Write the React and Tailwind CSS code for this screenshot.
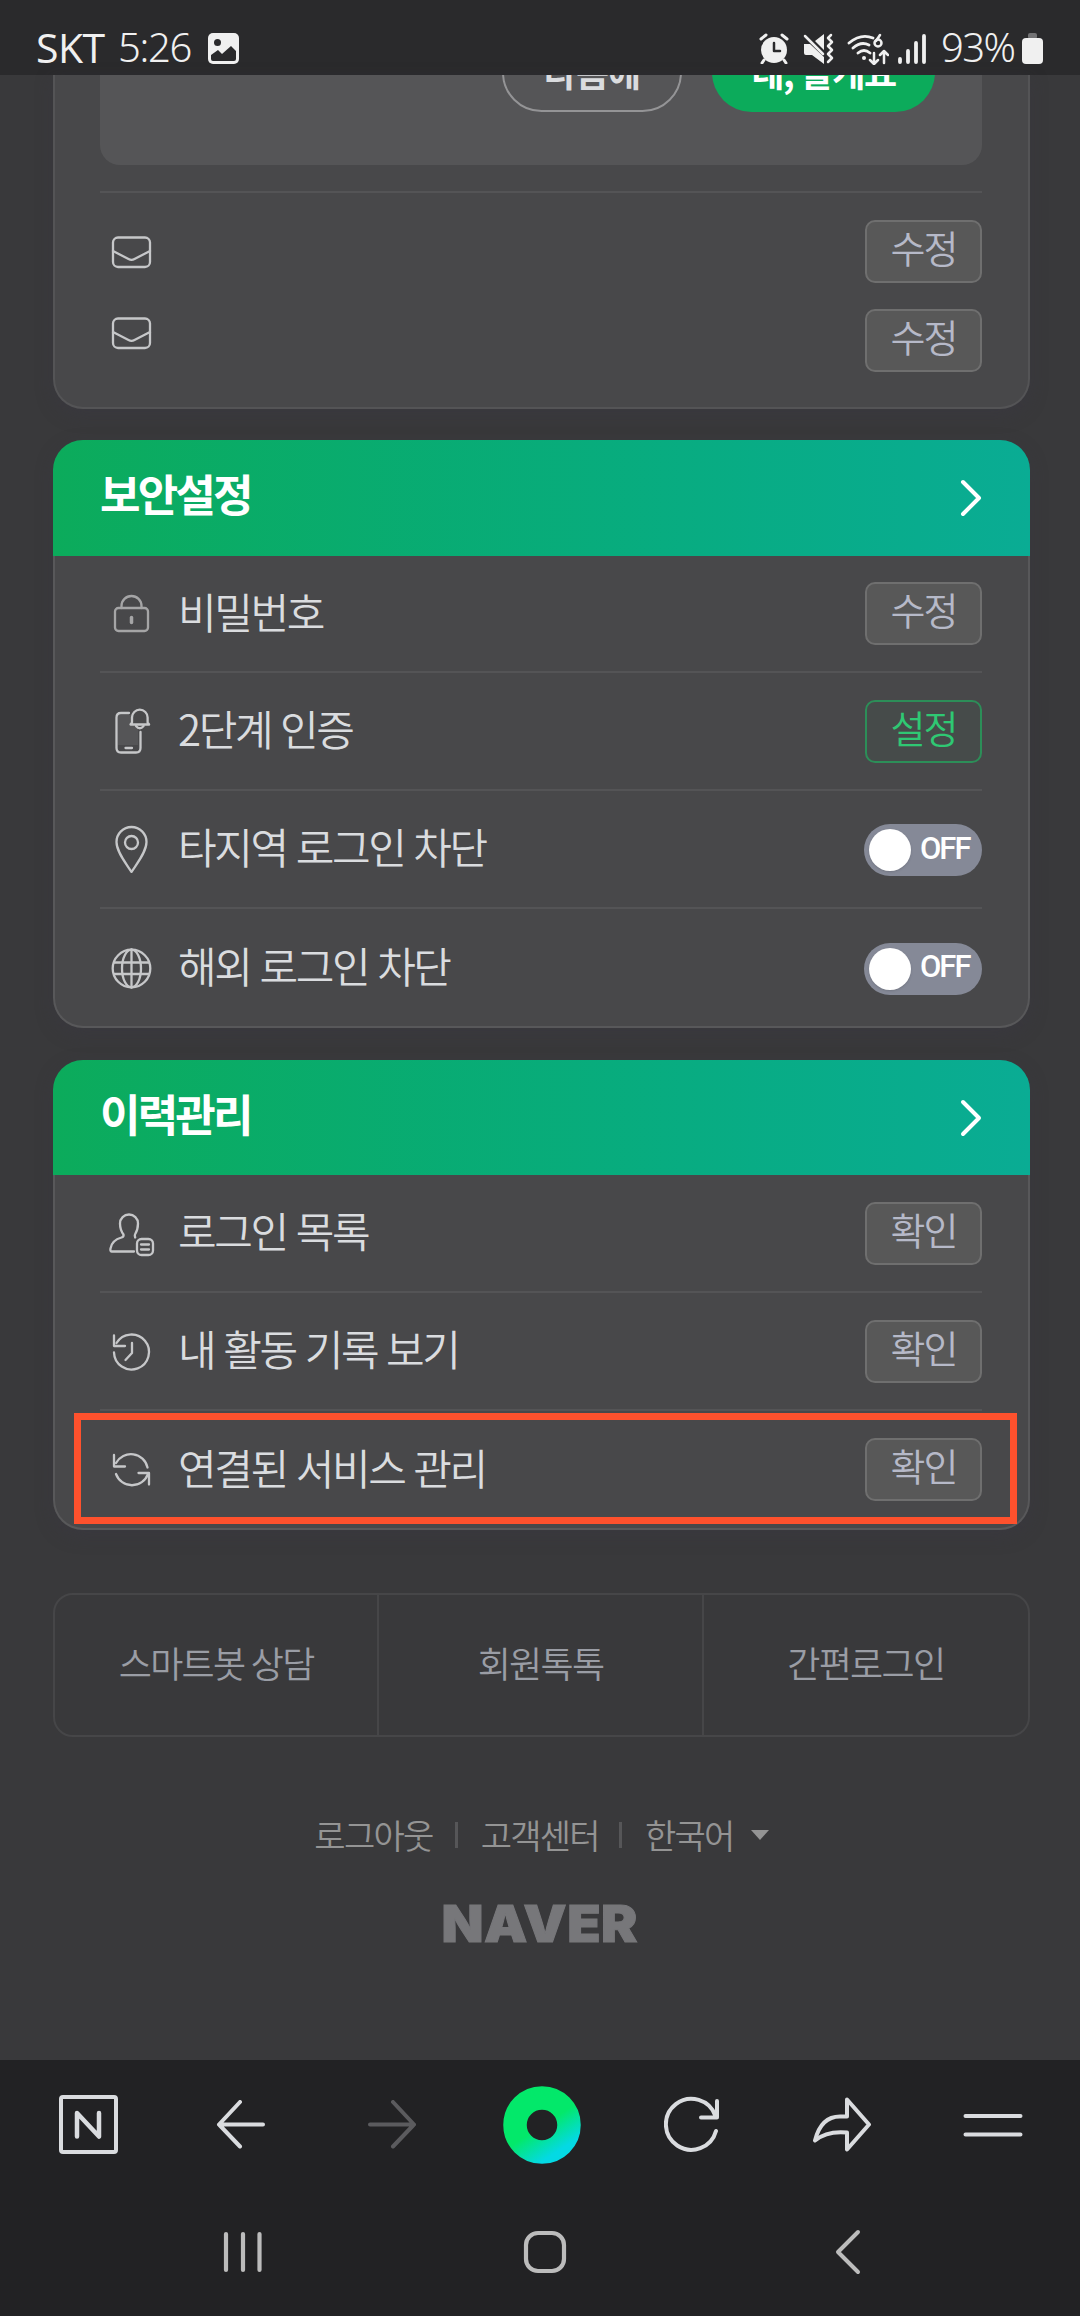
const KR = 'font-["Noto_Sans_CJK_KR",sans-serif]';

function Svg({ w, h, className = "", children }) {
    return (
        <svg width={w} height={h} viewBox={`0 0 ${w} ${h}`} fill="none" stroke="currentColor" strokeLinecap="round" strokeLinejoin="round" strokeWidth="2.300" className={`block shrink-0 ${className}`}>
            {children}
        </svg>
    );
}

/* 48x48 row icons */
const icons = {
    mail: (
        <>
            <rect x="5" y="9.500" width="37" height="29.500" rx="5" />
            <path d="M5 23l15.500 8q3 1.600 6 0L42 23" />
        </>
    ),
    lock: (
        <g className="text-[#a5a5a6]" stroke="currentColor">
            <rect x="7" y="18" width="33" height="23" rx="3.500" />
            <path d="M13.500 18v-2a10 10 0 0 1 20 0v2" />
            <path d="M23.500 27.500v5" strokeWidth="3.500" />
        </g>
    ),
    phone: (
        <>
            <rect x="10" y="8" width="20" height="30" fill="#555557" stroke="none" />
            <path d="M21 6h-8q-4.500 0-4.500 4.500V41q0 4.500 4.500 4.500h15q4.500 0 4.500-4.500V25M17.500 41h6.500" />
            <path d="M22.500 17.500l1.500-2v-5a7.800 7.800 0 0 1 15.600 0v5l1.500 2z" fill="#48484a" />
            <path d="M28 19q3.800 4.500 7.600 0" />
        </>
    ),
    pin: (
        <>
            <path d="M23.500 47C18.500 39 8.500 27 8.500 17a15 15 0 0 1 30 0c0 10-10 22-15 30z" />
            <circle cx="23.500" cy="17.500" r="6.500" />
        </>
    ),
    globe: (
        <>
            <circle cx="23.500" cy="24.500" r="18.800" />
            <ellipse cx="23.500" cy="24.500" rx="9.500" ry="18.800" />
            <path d="M23.500 5.500v38M6 18.500h35M6 30h35" />
        </>
    ),
    user: (
        <g transform="translate(0 2)">
            <path d="M26 40.500H3.500q-1.500 0-1-3c1-6 5.500-9.500 11-11q2.500-.8 2-3c-3-4-3.500-8-3.500-11a9 9 0 0 1 18 0c0 3-.5 7-3 11q-.5 1 .2 3" />
            <rect x="29" y="28" width="16" height="16" rx="4.500" />
            <path d="M33 33.500h8M33 38.500h8" />
        </g>
    ),
    history: (
        <g transform="translate(0 1)">
            <path d="M6 24.500a17.500 17.500 0 1 0 2.500-9.500" />
            <path d="M6 7.500v10.500h11" />
            <path d="M24 15v10l-6.500 7" />
        </g>
    ),
    sync: (
        <>
            <path d="M39.500 21.500A17 17 0 0 0 8 17M8 28a17 17 0 0 0 32 0" />
            <path d="M6 9v11.500h11M30.500 27h10.500v11.500" />
        </>
    ),
};

function RowIcon({ name }) {
    return <Svg w={48} h={48} className="text-[#c6c7c9]">{icons[name]}</Svg>;
}

function Button({ children, green }) {
    return (
        <button
            className={`flex h-[63px] w-[117px] justify-center rounded-[10px] border-2 text-[38px] leading-[49px] font-[350] tracking-[-2px] ${
                green ? "border-[#2c8e58] bg-[#464b4a] text-[#2fc873]" : "border-[#6f6f6f] bg-[#585858] text-[#b6b9c8]"
            }`}
        >
            {children}
        </button>
    );
}

function Toggle() {
    return (
        <div className="mt-[2px] flex h-[52px] w-[118px] items-center rounded-full bg-[#858997] pl-[5px]">
            <div className="size-[42px] rounded-full bg-white shadow-sm" />
            <span className='ml-[9px] -mt-[3px] font-["Roboto"] text-[31px] leading-[40px] font-medium tracking-[-2px] text-white'>OFF</span>
        </div>
    );
}

function Row({ icon, label, children, className = "h-[118px] border-b-2" }) {
    return (
        <div className={`flex items-center border-[#545456] ${className}`}>
            <div className="ml-[8px]"><RowIcon name={icon} /></div>
            <span className="ml-[22px] flex-1 whitespace-pre pb-[6px] text-[42px] leading-[60px] font-[350] tracking-[-2.400px] text-[#dadcdf] [word-spacing:2px]">{label}</span>
            {children}
        </div>
    );
}

function Section({ title, className, headClass, children }) {
    return (
        <section className={`rounded-[30px] shadow-[0_6px_16px_rgba(58,56,66,0.5)] ${className}`}>
            <header className={`flex items-center justify-between rounded-t-[30px] bg-linear-to-r from-[#0cab5b] to-[#0aac94] pr-[48px] pl-[47px] ${headClass}`}>
                <h2 className="pb-[10px] text-[44px] leading-[60px] font-bold tracking-[-2.800px] text-white">{title}</h2>
                <Svg w={22} h={38} className="text-white">
                    <path d="M3 3l16 16L3 35" strokeWidth="4" />
                </Svg>
            </header>
            <div className="rounded-b-[30px] border-2 border-t-0 border-[#58585a] bg-[#48484a] pr-[46px] pl-[45px]">{children}</div>
        </section>
    );
}

function StatusBar() {
    return (
        <div className='flex h-[75px] shrink-0 items-start bg-[#2a2a2c] pt-[33px] pl-[36px] font-["Noto_Sans"] text-[40px] leading-[31px] text-[#f0f0f0]'>
            <span className='-mt-[1px] w-[82px] font-["Open_Sans"] text-[41px] tracking-[-0.5px]'>SKT</span>
            <span className="-mt-[2px] w-[90px] font-[350] tracking-[-1.300px]">5:26</span>
            <Svg w={31} h={31}>
                <rect width="31" height="31" rx="5" fill="currentColor" stroke="none" />
                <circle cx="9.500" cy="9.500" r="3.500" fill="#2a2a2c" stroke="none" />
                <path d="M3 22l7-5 4 4 9-8 5 5v8q0 2-2 2H5q-2 0-2-2z" fill="#2a2a2c" stroke="none" />
            </Svg>
            <div className="flex-1" />
            <Svg w={30} h={31}>
                <circle cx="15" cy="17" r="13" fill="currentColor" stroke="none" />
                <path d="M2 6l5-4M28 6l-5-4M5 27l-2 3M25 27l2 3" strokeWidth="3" />
                <path d="M15 10v8h6" stroke="#2a2a2c" strokeWidth="2.500" />
            </Svg>
            <Svg w={31} h={31} className="ml-[14px]">
                <path d="M1 11h6l14 13v7L9 22H3q-2 0-2-2zM12 8l9-7v16z" fill="currentColor" stroke="none" />
                <path d="M2 3l18 18" strokeWidth="2.500" />
                <path d="M28 2l-3 3 4 4-4 4 4 4-4 4 4 4-4 4" strokeWidth="2.500" />
            </Svg>
            <Svg w={42} h={32} className="ml-[13px]">
                <path d="M2 10q12-10 24-5M6 15q8-7 16-3M11 20q6-5 12 0" strokeWidth="2.800" />
                <circle cx="17" cy="25" r="2" fill="currentColor" stroke="none" />
                <path d="M33 2l-4 6" strokeWidth="2.500" />
                <circle cx="31" cy="10" r="3.500" strokeWidth="2.500" />
                <path d="M27 20v10M23 27l4 4 4-4M37 30V19M33 22l4-4 4 4" strokeWidth="2.500" />
            </Svg>
            <Svg w={30} h={31} className="ml-[9px]">
                <path d="M2 26v3M10 18v11M18 10v19M26 3v26" strokeWidth="3.800" />
            </Svg>
            <span className="-mt-[2px] ml-[13px] w-[81px] font-[350] tracking-[-1.600px]">93%</span>
            <Svg w={22} h={31} className="mr-[36px]">
                <rect x="6" y="0" width="9" height="6" rx="2" fill="#727274" stroke="none" />
                <rect y="5" width="21" height="26" rx="4" fill="currentColor" stroke="none" />
            </Svg>
        </div>
    );
}

function ProfileCard() {
    return (
        <section className="mx-[53px] h-[334px] w-[977px] shrink-0 overflow-hidden rounded-b-[30px] border-2 border-t-0 border-[#545456] bg-[#48484a] pr-[46px] pl-[45px] shadow-[0_6px_16px_rgba(58,56,66,0.5)]">
            <div className="flex h-[90px] items-start justify-end gap-[30px] overflow-hidden rounded-b-[20px] bg-[#555557] pr-[47px]">
                <div className="-mt-[42px] flex h-[79px] w-[180px] shrink-0 items-center justify-center rounded-full border-2 border-[#949496] pb-[4px] text-[36px] leading-[40px] font-bold tracking-[-1px] text-[#dadcdf]">다음에</div>
                <div className="-mt-[42px] flex h-[79px] w-[223px] shrink-0 items-center justify-center rounded-full bg-[#0cab5b] pb-[4px] text-[36px] leading-[40px] font-bold tracking-[-1.300px] text-white">네, 할게요</div>
            </div>
            <div className="mt-[26px] h-[2px] bg-[#545456]" />
            <div className="mt-[27px] flex justify-between pl-[8px]">
                <div className="pt-[8px]"><RowIcon name="mail" /></div>
                <Button>수정</Button>
            </div>
            <div className="mt-[26px] flex justify-between pl-[8px]">
                <RowIcon name="mail" />
                <Button>수정</Button>
            </div>
        </section>
    );
}

function Footer() {
    return (
        <footer className="flex w-[977px] flex-col items-center font-[350]">
            <div className="grid h-[144px] w-full grid-cols-3 divide-x-2 divide-[#464648] rounded-[20px] border-2 border-[#464648] text-center text-[36px] leading-[135px] tracking-[-1.700px] text-[#9a9da5]">
                <span>스마트봇 상담</span>
                <span>회원톡톡</span>
                <span>간편로그인</span>
            </div>
            <div className="mt-[74px] flex h-[48px] items-center text-[34px] leading-[48px] tracking-[-1.700px] text-[#949494]">
                <span>로그아웃</span>
                <i className="mr-[23px] ml-[22px] h-[26px] w-[3px] bg-[#565658]" />
                <span>고객센터</span>
                <i className="mr-[23px] ml-[20px] h-[26px] w-[3px] bg-[#565658]" />
                <span>한국어</span>
                <svg width="18" height="10" viewBox="0 0 18 10" className="ml-[17px]" fill="#949494">
                    <path d="M0 0h18l-9 10z" />
                </svg>
            </div>
            <div className='mt-[41px] mr-[4px] scale-x-107 font-["Inter"] text-[51px] leading-[48px] font-black tracking-[0.500px] text-[#77777a] [-webkit-text-stroke:1px_#77777a]'>NAVER</div>
        </footer>
    );
}

function BottomBar() {
    return (
        <nav className="h-[256px] shrink-0 bg-[#222224]">
            <div className="flex h-[130px] items-center pl-[58px] text-[#dadcdf]">
                <Svg w={61} h={60}>
                    <rect x="3" y="2" width="55" height="55" rx="2" strokeWidth="4" />
                    <path d="M19 41.500V18l22 23.500V18" strokeWidth="4.500" />
                </Svg>
                <Svg w={50} h={50} className="ml-[97px]">
                    <path d="M24 2L3 24.500l21 22M3 24.500h44" strokeWidth="4" />
                </Svg>
                <Svg w={50} h={50} className="ml-[101px] text-[#5b5b5e]">
                    <path d="M26 2l21 22.500-21 22M47 24.500H3" strokeWidth="4" />
                </Svg>
                <svg width="78" height="78" viewBox="0 0 78 78" className="ml-[86px]">
                    <defs>
                        <linearGradient id="dot" x1="0.3" y1="0.1" x2="0.85" y2="0.95">
                            <stop offset="0.45" stopColor="#03e86a" />
                            <stop offset="1" stopColor="#04d9e4" />
                        </linearGradient>
                    </defs>
                    <circle cx="39" cy="39" r="27" fill="none" stroke="url(#dot)" strokeWidth="23.500" />
                </svg>
                <Svg w={58} h={58} className="ml-[83px]">
                    <path d="M51.500 20A25.500 25.500 0 1 0 52 35M53 5v16.500H37" strokeWidth="4" />
                </Svg>
                <Svg w={60} h={56} className="ml-[91px]">
                    <path d="M34 2.500l22 25-22 25V35.500q-20-2-32 8Q8 19.500 27 19.500h7z" strokeWidth="4" />
                </Svg>
                <Svg w={60} h={30} className="ml-[90px]">
                    <path d="M2.500 6h55M2.500 24.500h55" strokeWidth="4" />
                </Svg>
            </div>
            <div className="flex h-[124px] items-center pl-[222px] text-[#bcbcbc]">
                <Svg w={42} h={44}>
                    <path d="M4 4v36M21 4v36M37.500 4v36" strokeWidth="4.200" />
                </Svg>
                <Svg w={44} h={44} className="ml-[259px]">
                    <rect x="3" y="3" width="38" height="38" rx="12" strokeWidth="4.200" />
                </Svg>
                <Svg w={28} h={46} className="ml-[266px]">
                    <path d="M25 3L5 23l20 20" strokeWidth="4" />
                </Svg>
            </div>
        </nav>
    );
}

export default function App() {
    return (
        <div className={`flex h-[2316px] w-[1080px] flex-col overflow-hidden bg-[#39393b] ${KR}`}>
            <StatusBar />
            <ProfileCard />
            <main className="flex min-h-0 flex-1 flex-col pl-[53px]">
                <Section title="보안설정" className="mt-[31px] w-[977px]" headClass="h-[116px]">
                    <Row icon="lock" label="비밀번호" className="h-[117px] border-b-2"><Button>수정</Button></Row>
                    <Row icon="phone" label="2단계 인증"><Button green>설정</Button></Row>
                    <Row icon="pin" label="타지역 로그인 차단"><Toggle /></Row>
                    <Row icon="globe" label="해외 로그인 차단" className="h-[117px]"><Toggle /></Row>
                </Section>
                <Section title="이력관리" className="relative mt-[32px] w-[977px]" headClass="h-[115px]">
                    <Row icon="user" label="로그인 목록"><Button>확인</Button></Row>
                    <Row icon="history" label="내 활동 기록 보기"><Button>확인</Button></Row>
                    <Row icon="sync" label="연결된 서비스 관리" className="h-[117px]"><Button>확인</Button></Row>
                    <div className="absolute right-[13px] bottom-[6px] left-[21px] h-[111px] border-[7px] border-[#fe512d]" />
                </Section>
                <div className="mt-[63px]"><Footer /></div>
            </main>
            <BottomBar />
        </div>
    );
}
